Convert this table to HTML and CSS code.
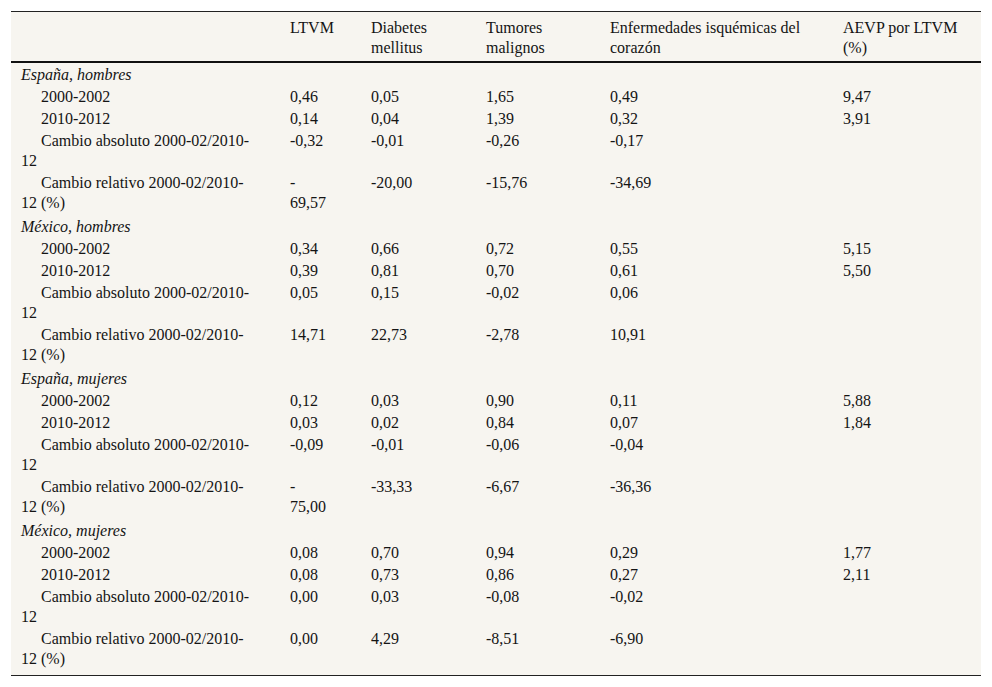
FILE: index.html
```html
<!DOCTYPE html>
<html lang="es">
<head>
<meta charset="utf-8">
<link rel="stylesheet" href="styles.css">
</head>
<body>
<table class="data">
<colgroup>
<col class="c-label"><col class="c-ltvm"><col class="c-diab"><col class="c-tum"><col class="c-enf"><col class="c-aevp">
</colgroup>
<thead>
<tr><th></th><th>LTVM</th><th>Diabetes<br>mellitus</th><th>Tumores<br>malignos</th><th>Enfermedades isquémicas del<br>corazón</th><th>AEVP por LTVM<br>(%)</th></tr>
</thead>
<tbody>
<tr class="group"><td colspan="6">España, hombres</td></tr>
<tr><td class="lbl">2000-2002</td><td>0,46</td><td>0,05</td><td>1,65</td><td>0,49</td><td>9,47</td></tr>
<tr><td class="lbl">2010-2012</td><td>0,14</td><td>0,04</td><td>1,39</td><td>0,32</td><td>3,91</td></tr>
<tr><td class="lbl">Cambio absoluto 2000-02/2010-<br>12</td><td>-0,32</td><td>-0,01</td><td>-0,26</td><td>-0,17</td><td></td></tr>
<tr class="rel"><td class="lbl">Cambio relativo 2000-02/2010-<br>12 (%)</td><td>-<br>69,57</td><td>-20,00</td><td>-15,76</td><td>-34,69</td><td></td></tr>
<tr class="group"><td colspan="6">México, hombres</td></tr>
<tr><td class="lbl">2000-2002</td><td>0,34</td><td>0,66</td><td>0,72</td><td>0,55</td><td>5,15</td></tr>
<tr><td class="lbl">2010-2012</td><td>0,39</td><td>0,81</td><td>0,70</td><td>0,61</td><td>5,50</td></tr>
<tr><td class="lbl">Cambio absoluto 2000-02/2010-<br>12</td><td>0,05</td><td>0,15</td><td>-0,02</td><td>0,06</td><td></td></tr>
<tr class="rel"><td class="lbl">Cambio relativo 2000-02/2010-<br>12 (%)</td><td>14,71</td><td>22,73</td><td>-2,78</td><td>10,91</td><td></td></tr>
<tr class="group"><td colspan="6">España, mujeres</td></tr>
<tr><td class="lbl">2000-2002</td><td>0,12</td><td>0,03</td><td>0,90</td><td>0,11</td><td>5,88</td></tr>
<tr><td class="lbl">2010-2012</td><td>0,03</td><td>0,02</td><td>0,84</td><td>0,07</td><td>1,84</td></tr>
<tr><td class="lbl">Cambio absoluto 2000-02/2010-<br>12</td><td>-0,09</td><td>-0,01</td><td>-0,06</td><td>-0,04</td><td></td></tr>
<tr class="rel"><td class="lbl">Cambio relativo 2000-02/2010-<br>12 (%)</td><td>-<br>75,00</td><td>-33,33</td><td>-6,67</td><td>-36,36</td><td></td></tr>
<tr class="group"><td colspan="6">México, mujeres</td></tr>
<tr><td class="lbl">2000-2002</td><td>0,08</td><td>0,70</td><td>0,94</td><td>0,29</td><td>1,77</td></tr>
<tr><td class="lbl">2010-2012</td><td>0,08</td><td>0,73</td><td>0,86</td><td>0,27</td><td>2,11</td></tr>
<tr><td class="lbl">Cambio absoluto 2000-02/2010-<br>12</td><td>0,00</td><td>0,03</td><td>-0,08</td><td>-0,02</td><td></td></tr>
<tr class="rel"><td class="lbl">Cambio relativo 2000-02/2010-<br>12 (%)</td><td>0,00</td><td>4,29</td><td>-8,51</td><td>-6,90</td><td></td></tr>
</tbody>
</table>
</body>
</html>
```
FILE: styles.css
```css
html, body {
  margin: 0;
  background: #ffffff;
}
body {
  padding: 11px 11px 0 11px;
}
.data, .data th, .data td {
  font-family: "Liberation Serif", "Times New Roman", serif;
  font-size: 16px;
  color: #141414;
}
.data {
  width: 970px;
  border-collapse: collapse;
  table-layout: fixed;
  background: #f7f5f0;
  border-top: 1px solid #222;
  border-bottom: 1px solid #222;
}
.c-label { width: 269px; }
.c-ltvm { width: 81px; }
.c-diab { width: 115px; }
.c-tum { width: 124px; }
.c-enf { width: 233px; }
.c-aevp { width: 148px; }
.data th {
  font-weight: normal;
  text-align: left;
  vertical-align: top;
  line-height: 20px;
  padding: 6px 10px 3px 10px;
  border-bottom: 2px solid #111;
}
.data td {
  text-align: left;
  vertical-align: top;
  line-height: 20px;
  padding: 1px 10px;
}
.data .group td {
  font-style: italic;
  padding-top: 2px;
}
.data td.lbl {
  text-indent: 20px;
}
.data .rel td {
  padding-bottom: 2px;
}
.data tbody tr:last-child td {
  padding-bottom: 6px;
}
```
